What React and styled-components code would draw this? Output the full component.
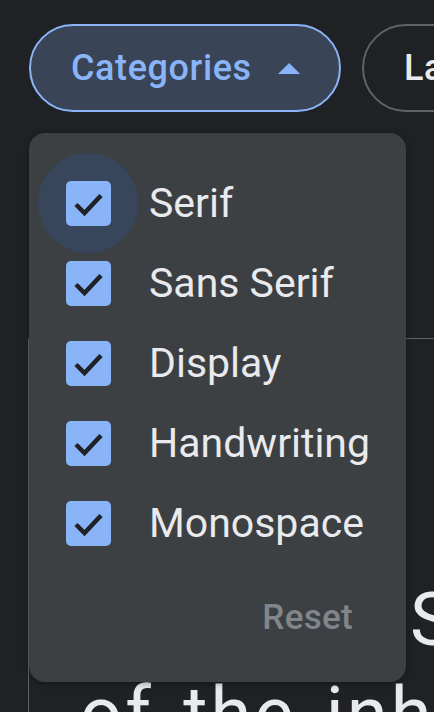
import React from "react";
import styled, { createGlobalStyle } from "styled-components";

const Global = createGlobalStyle`
  html, body { margin: 0; padding: 0; background: #202124; overflow: hidden; }
  body { font-family: Roboto, "Liberation Sans", sans-serif; width: 434px; height: 712px; }
`;

const Page = styled.div`
  position: relative;
  width: 434px;
  height: 712px;
  overflow: hidden;
  background: #202124;
`;

const ChipRow = styled.div`
  display: flex;
  gap: 21px;
  padding: 24px 0 0 29px;
  white-space: nowrap;
`;

const Chip = styled.button`
  box-sizing: border-box;
  height: 88px;
  flex-shrink: 0;
  display: flex;
  align-items: center;
  gap: 26px;
  padding: 0 39px 0 40px;
  border-radius: 44px;
  font-family: Roboto, "Liberation Sans", sans-serif;
  font-size: 36px;
  font-weight: 500;
  letter-spacing: 0.6px;
  border: 2px solid ${(p) => (p.$active ? "#8ab4f8" : "#5f6368")};
  background: ${(p) => (p.$active ? "#394457" : "transparent")};
  color: ${(p) => (p.$active ? "#8ab4f8" : "#e8eaed")};
  width: ${(p) => p.$width || "auto"};
`;

const Card = styled.div`
  margin: 226px 0 0 28px;
  border-top: 1px solid #5f6368;
  border-left: 1px solid #5f6368;
  border-top-left-radius: 2px;
  padding: 234px 0 0 51px;
  height: 400px;
  color: #e8eaed;
  font-size: 74px;
  line-height: 94px;
  white-space: nowrap;
`;

const SampleLine = styled.div`
  font-family: Roboto, "Liberation Sans", sans-serif;
  word-spacing: ${(p) => p.$ws || "normal"};
  letter-spacing: ${(p) => p.$ls || "normal"};
`;

const Menu = styled.div`
  position: absolute;
  left: 29px;
  top: 133px;
  width: 377px;
  height: 549px;
  box-sizing: border-box;
  background: #3c4043;
  border-radius: 16px;
  box-shadow: 0 2px 6px rgba(0, 0, 0, 0.3);
  padding: 30px 53px 0 37px;
  display: flex;
  flex-direction: column;
`;

const Row = styled.label`
  height: 80px;
  display: flex;
  align-items: center;
  gap: 38px;
  color: #e8eaed;
  font-size: 41px;
  font-family: Roboto, "Liberation Sans", sans-serif;
`;

const BoxWrap = styled.span`
  position: relative;
  width: 45px;
  height: 45px;
  flex-shrink: 0;
  &::before {
    content: "";
    display: ${(p) => (p.$focus ? "block" : "none")};
    position: absolute;
    left: -28px;
    top: -28px;
    width: 100px;
    height: 100px;
    border-radius: 50%;
    background: #37465a;
  }
`;

const Box = styled.svg`
  position: relative;
  display: block;
  width: 45px;
  height: 45px;
`;

const Footer = styled.div`
  display: flex;
  justify-content: flex-end;
  margin-top: 34px;
`;

const ResetBtn = styled.button`
  background: none;
  border: none;
  padding: 0;
  line-height: 1.2;
  font-family: Roboto, "Liberation Sans", sans-serif;
  font-size: 35px;
  font-weight: 500;
  color: #80868b;
  letter-spacing: 0.3px;
`;

const Caret = () => (
  <svg width="26" height="13" viewBox="0 0 26 13">
    <path d="M0 13 L13 0 L26 13 Z" fill="#8ab4f8" />
  </svg>
);

const Check = ({ focus }) => (
  <BoxWrap $focus={focus}>
    <Box viewBox="0 0 45 45">
      <rect x="0" y="0" width="45" height="45" rx="5" fill="#8ab4f8" />
      <path d="M10 23.5 L18.5 32 L35 14.5" fill="none" stroke="#202124" strokeWidth="4.5" />
    </Box>
  </BoxWrap>
);

const items = ["Serif", "Sans Serif", "Display", "Handwriting", "Monospace"];

export default function App() {
  return (
    <Page>
      <Global />
      <ChipRow>
        <Chip $active $width="312px">
          Categories
          <Caret />
        </Chip>
        <Chip>Language</Chip>
      </ChipRow>
      <Card>
        <SampleLine $ws="24px">Whereas Sphinx</SampleLine>
        <SampleLine $ls="3px" $ws="8px">of the inherent dignity</SampleLine>
      </Card>
      <Menu>
        {items.map((it, i) => (
          <Row key={it}>
            <Check focus={i === 0} />
            {it}
          </Row>
        ))}
        <Footer>
          <ResetBtn>Reset</ResetBtn>
        </Footer>
      </Menu>
    </Page>
  );
}
